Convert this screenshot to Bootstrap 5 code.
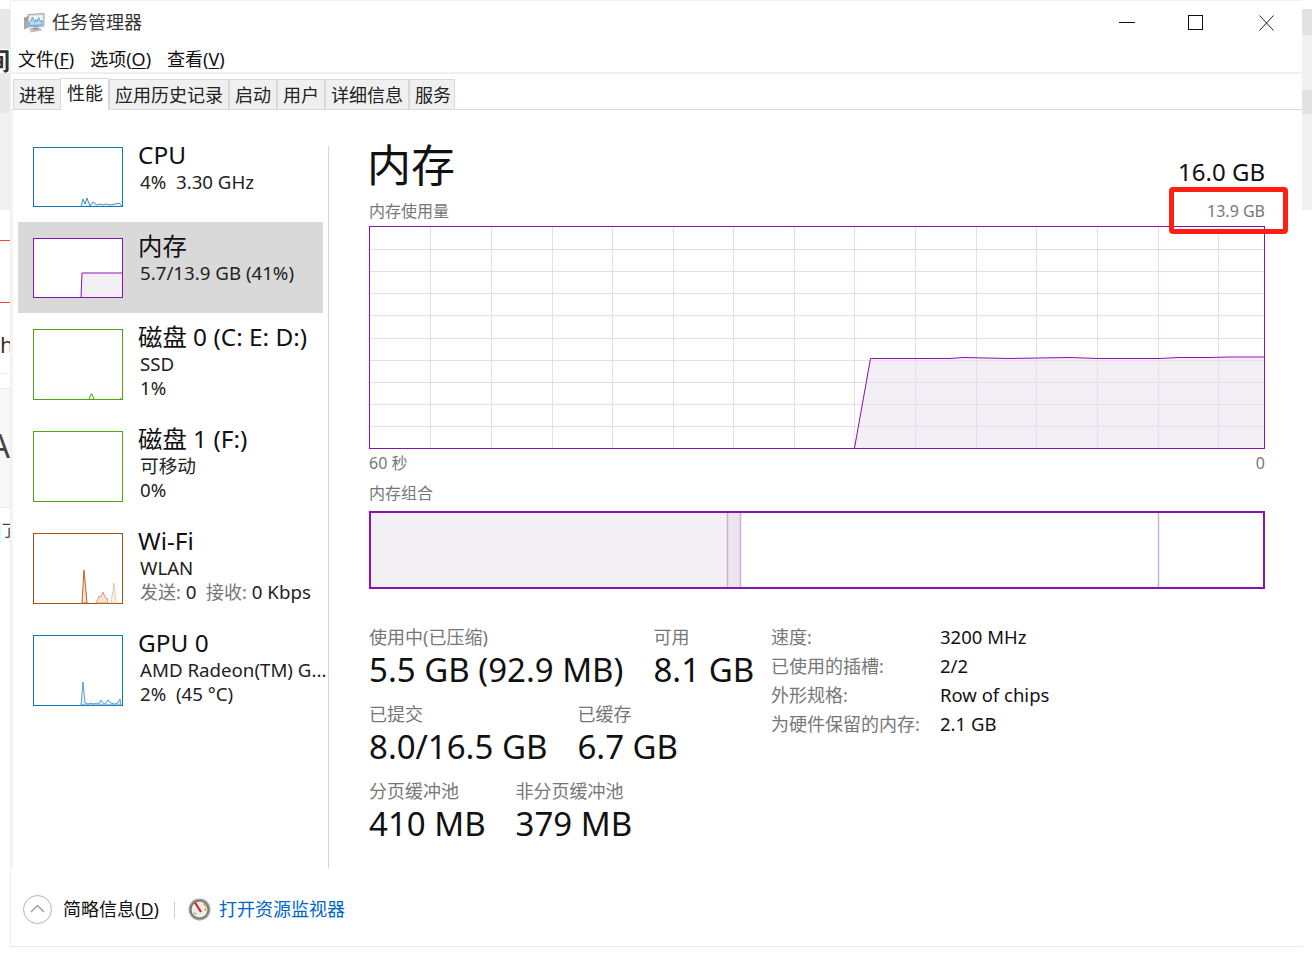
<!DOCTYPE html>
<html lang="zh-CN">
<head>
<meta charset="utf-8">
<title>任务管理器</title>
<link href="https://cdn.jsdelivr.net/npm/bootstrap@5.3.0/dist/css/bootstrap.min.css" rel="stylesheet">
<style>
html,body{margin:0;height:100%;background:#fff;overflow:hidden}
body{font-family:"Noto Sans","Noto Sans CJK SC",sans-serif;font-size:18px;color:#111;position:relative}
.peek{position:absolute;overflow:hidden;white-space:nowrap;line-height:1}
.pk-a{left:0;top:9px;width:10px;height:104px;background:#e8e8e8}
.pk-b{left:0;top:113px;width:10px;height:97px;background:#f1f1f1}
.pk-c{left:0;top:49px;width:10px;height:24px;font-size:24px;font-weight:700;color:#333;direction:rtl;background:#fff}
.pk-d{left:0;top:240px;width:10px;height:1px;background:#ff4040}
.pk-e{left:0;top:302px;width:10px;height:1px;background:#ff4040}
.pk-f{left:0;top:333px;width:10px;height:24px;font-size:22px;color:#333;text-align:right}
.pk-g{left:0;top:373px;width:10px;height:16px;border-top:1px solid #eee;border-bottom:1px solid #e8e8e8}
.pk-h{left:0;top:389px;width:10px;height:119px;background:#f8f8f8;border-bottom:1px solid #e8e8e8}
.pk-i{left:0;top:430px;width:10px;height:34px;font-size:32px;color:#444;direction:rtl}
.pk-j{left:0;top:522px;width:10px;height:20px;font-size:16px;color:#444;border-left:1px solid #c8ffff}
.pk-k{left:1302px;top:9px;width:10px;height:26px;background:#e2e2e2}
.pk-l{left:1302px;top:35px;width:10px;height:55px;background:#f1f1f1}
.pk-m{left:1302px;top:90px;width:10px;height:24px;background:#e2e2e2}
.pk-n{left:1302px;top:114px;width:10px;height:96px;background:#f1f1f1}
.tm-win{position:absolute;left:10px;top:0;width:1292px;height:947px;background:#fff;border-top:1px solid #f0f0f0;border-bottom:1px solid #e8e8e8;border-left:1px solid #f0f0f0;display:flex;flex-direction:column}
.tm-title{height:37px;padding:6px 0 0 12px}
.tm-title span{font-size:18px;color:#333;margin-left:7px}
.tm-ctrl{padding-right:20px}
.tm-ctrl svg{display:block}
.tm-menu{height:36px;padding-left:7px;gap:16px;border-bottom:2px solid #f0f0f0;line-height:42px}
.tm-tabs{height:36px;padding:3px 0 0 2px;border-bottom:1px solid #d9d9d9;flex-wrap:nowrap;align-items:flex-end}
.tm-tabs .nav-link{height:30px;margin:0;padding:0 5px;line-height:31px;background:#f0f0f0;border:1px solid #d9d9d9;border-bottom:0;border-radius:0;color:#222;font-size:18px}
.tm-tabs .nav-item:last-child .nav-link{padding-right:3px}
.tm-tabs .nav-link.active{height:32px;padding:0 5px 0 6px;line-height:29px;background:#fff;color:#222;margin:0 0 -1px -1px;border-color:#d9d9d9}
.tm-body{height:758px;border-left:2px solid #f5f5f5}
.tm-side{width:315px;flex:none;padding:21px 0 0 5px}
.tm-rule{width:1px;height:722px;margin-top:36px;background:#d4d4d4;flex:none}
.tm-item{width:305px;padding:16px 0 0 15px;gap:15px;height:102px;white-space:nowrap}
.tm-item.short{height:91px}
.tm-item.sel{background:#d9d9d9}
.tm-thumb{display:block;flex:none}
.tm-text{margin-top:-6px}
.tm-name{font-size:24.4px;line-height:28px}
.tm-sub{font-size:18.7px;line-height:24px;margin-left:2px;color:#222}
.tm-sub.first{margin-top:1px}
.tm-sub em{font-style:normal;color:#777;font-size:18px}
.tm-main{width:896px;flex:none;margin-left:40px;padding-top:30px}
.tm-h1{font-size:44px;line-height:50px;color:#111;margin-left:-2px}
.tm-cap{font-size:24px;line-height:24px;padding-top:20px}
.tm-label{font-size:16px;line-height:20px;color:#777}
.tm-lblrow{margin-top:11px;margin-bottom:5px}
.tm-axis{margin-top:4px}
.tm-axis2{margin-top:10px;margin-bottom:8px}
.tm-chart{display:block}
.tm-stats{margin-top:33px}
.tm-left{width:402px;padding-top:4px;flex:none}
.tm-srow{gap:30px;margin-bottom:11px}
.tm-k{font-size:18px;line-height:22px;color:#777;white-space:nowrap}
.tm-v{font-size:33px;line-height:44px;color:#111;white-space:nowrap}
.tm-grid{display:grid;grid-template-columns:169px auto;grid-auto-rows:29px;line-height:27px;font-size:18.5px;padding-top:1px}
.tm-grid .k{color:#777;font-size:18px;line-height:29px}
.tm-foot{height:77px;padding:6px 0 0 12px}
.tm-more{margin-left:11px;color:#111}
.tm-sep{width:1px;height:16px;background:#ccc;margin:0 13px 0 15px}
.tm-link{margin-left:8px;color:#0066cc;text-decoration:none}
.tm-mark{position:absolute;left:1169px;top:187px;width:119px;height:47px;border:5px solid #ff2015;border-radius:4px}
u{text-underline-offset:2px}
</style>
</head>
<body>
<div class="peek pk-a"></div><div class="peek pk-b"></div><div class="peek pk-c">间</div>
<div class="peek pk-d"></div><div class="peek pk-e"></div><div class="peek pk-f">h</div>
<div class="peek pk-g"></div><div class="peek pk-h"></div><div class="peek pk-i">A</div><div class="peek pk-j">了</div>
<div class="peek pk-k"></div><div class="peek pk-l"></div><div class="peek pk-m"></div><div class="peek pk-n"></div>

<div class="tm-win">
  <div class="tm-title d-flex justify-content-between">
    <div class="d-flex align-items-center">
      <svg width="22" height="20" viewBox="0 0 22 20"><path d="M1 4.500 5 3v12l-4 1.500z" fill="#a8aba6"/><path d="M2 6h2v1H2z" fill="#6e9e5a"/><path d="M5 1.500 21 .5v12.500L5 14z" fill="#d5d9de" stroke="#a2a6ab"/><path d="M6.500 3 19.500 2.200v9.300L6.500 12.500z" fill="#f3f8fc"/><path d="M6.500 9.500 8 8l1.500-4 2 5.500 1.500-3 1.500 2.500 1-4.500 2 4 1.500-1v4.500L6.500 12.500z" fill="#bcdcf0" stroke="#3a93cf" stroke-width=".8"/><path d="M6 15.500 17 14.500l2 3-11 2z" fill="#bcbfc2"/><path d="M10 14.500h5v2h-5z" fill="#8f9296"/></svg>
      <span>任务管理器</span>
    </div>
    <div class="tm-ctrl d-flex align-items-center">
      <svg width="177" height="18" viewBox="0 0 177 18"><path d="M14 8.500H30" stroke="#111" fill="none"/><rect x="83.500" y="1.500" width="14" height="14" fill="none" stroke="#111"/><path d="M154.500 1.500l14 15M168.500 1.500l-14 15" stroke="#222" fill="none"/></svg>
    </div>
  </div>
  <div class="tm-menu d-flex">
    <span>文件(<u>F</u>)</span><span>选项(<u>O</u>)</span><span>查看(<u>V</u>)</span>
  </div>
  <ul class="nav nav-tabs tm-tabs">
    <li class="nav-item"><a class="nav-link" href="#">进程</a></li>
    <li class="nav-item"><a class="nav-link active" href="#">性能</a></li>
    <li class="nav-item"><a class="nav-link" href="#">应用历史记录</a></li>
    <li class="nav-item"><a class="nav-link" href="#">启动</a></li>
    <li class="nav-item"><a class="nav-link" href="#">用户</a></li>
    <li class="nav-item"><a class="nav-link" href="#">详细信息</a></li>
    <li class="nav-item"><a class="nav-link" href="#">服务</a></li>
  </ul>
  <div class="tm-body d-flex">
    <div class="tm-side">
      <div class="tm-item short d-flex">
        <svg class="tm-thumb" width="90" height="60" viewBox="0 0 90 60"><rect x=".5" y=".5" width="89" height="59" fill="#fff" stroke="#1178b4"/><path d="M48 59l2-7 2 5 2-6 3 8 3-4 4 3 3-1 3 1 3-1 4 1 5-1 4-1 3 3" fill="#e8f2f8" stroke="#1178b4" stroke-width=".8"/></svg>
        <div class="tm-text"><div class="tm-name">CPU</div><div class="tm-sub first">4%&nbsp; 3.30 GHz</div></div>
      </div>
      <div class="tm-item short sel d-flex">
        <svg class="tm-thumb" width="90" height="60" viewBox="0 0 90 60"><rect x=".5" y=".5" width="89" height="59" fill="#fff" stroke="#8b12ae"/><path d="M48 59.500 49 35H89.500V59.500z" fill="#f2f0f4" stroke="#8b12ae"/></svg>
        <div class="tm-text"><div class="tm-name">内存</div><div class="tm-sub first">5.7/13.9 GB (41%)</div></div>
      </div>
      <div class="tm-item d-flex">
        <svg class="tm-thumb" width="90" height="71" viewBox="0 0 90 71"><rect x=".5" y=".5" width="89" height="70" fill="#fff" stroke="#4da60c"/><path d="M56 70l2-5h1l2 5M87 70l1-1" fill="#eef7e6" stroke="#4da60c"/></svg>
        <div class="tm-text"><div class="tm-name">磁盘 0 (C: E: D:)</div><div class="tm-sub first">SSD</div><div class="tm-sub">1%</div></div>
      </div>
      <div class="tm-item d-flex">
        <svg class="tm-thumb" width="90" height="71" viewBox="0 0 90 71"><rect x=".5" y=".5" width="89" height="70" fill="#fff" stroke="#4da60c"/></svg>
        <div class="tm-text"><div class="tm-name">磁盘 1 (F:)</div><div class="tm-sub first">可移动</div><div class="tm-sub">0%</div></div>
      </div>
      <div class="tm-item d-flex">
        <svg class="tm-thumb" width="90" height="71" viewBox="0 0 90 71"><rect x=".5" y=".5" width="89" height="70" fill="#fff" stroke="#a7500f"/><path d="M49 70l2-33 3 33z" fill="#f4e4d8" stroke="#b9682c"/><path d="M63 70l3-7 2 1 2-5 2 5 2 1 1 5z" fill="#f4e4d8" stroke="#c87f47" stroke-dasharray="1.500 .8"/><path d="M78 70l3-20 2 20z" fill="#fbf0ea" stroke="#dc9f7c" stroke-dasharray="1 1"/></svg>
        <div class="tm-text"><div class="tm-name">Wi-Fi</div><div class="tm-sub first">WLAN</div><div class="tm-sub"><em>发送:</em> 0&nbsp; <em>接收:</em> 0 Kbps</div></div>
      </div>
      <div class="tm-item d-flex">
        <svg class="tm-thumb" width="90" height="71" viewBox="0 0 90 71"><rect x=".5" y=".5" width="89" height="70" fill="#fff" stroke="#1178b4"/><path d="M48 70l2-23 2 21 3 1 3-1 3 1 3-1 2 1 2-4 2 3 2 1 3-4 3 3 3 1 4-1 2-4 1 6z" fill="#e8f2f8" stroke="#2d8ac4" stroke-width=".8"/></svg>
        <div class="tm-text"><div class="tm-name">GPU 0</div><div class="tm-sub first">AMD Radeon(TM) G...</div><div class="tm-sub">2%&nbsp; (45 °C)</div></div>
      </div>
    </div>
    <div class="tm-rule"></div>
    <div class="tm-main">
      <div class="d-flex justify-content-between">
        <div class="tm-h1">内存</div>
        <div class="tm-cap">16.0 GB</div>
      </div>
      <div class="tm-lblrow tm-label d-flex justify-content-between"><span>内存使用量</span><span>13.9 GB</span></div>
      <svg class="tm-chart" width="896" height="223" viewBox="0 0 896 223">
        <rect x=".5" y=".5" width="895" height="222" fill="#fff"/>
        <path d="M485.500 222 501.500 132H896V222z" fill="#f2f0f4"/>
        <path d="M61.500 1V222M122.500 1V222M183.500 1V222M243.500 1V222M304.500 1V222M364.500 1V222M425.500 1V222M485.500 1V222M546.500 1V222M607.500 1V222M667.500 1V222M728.500 1V222M789.500 1V222M849.500 1V222M1 23.500H895M1 45.500H895M1 67.500H895M1 89.500H895M1 112.500H895M1 134.500H895M1 156.500H895M1 178.500H895M1 200.500H895" stroke="#e9dcef" fill="none"/>
        <path d="M485.500 222 501.500 132.500H580L595 131.500 640 132.500 700 131.500 730 132.500H790L810 131.500H840L860 131H896" fill="none" stroke="#8b12ae"/>
        <rect x=".5" y=".5" width="895" height="222" fill="none" stroke="#8b12ae"/>
      </svg>
      <div class="tm-axis tm-label d-flex justify-content-between"><span>60 秒</span><span>0</span></div>
      <div class="tm-axis2 tm-label">内存组合</div>
      <svg class="tm-chart" width="896" height="78" viewBox="0 0 896 78">
        <rect x="1" y="1" width="894" height="76" fill="#fff"/>
        <rect x="1" y="1" width="358" height="76" fill="#f2f0f4"/>
        <rect x="358" y="1" width="14" height="76" fill="#ece4f0"/>
        <path d="M358.500 1V77M371.500 1V77M789.500 1V77" stroke="#cdaed9" stroke-width="1.500" fill="none"/>
        <rect x="1" y="1" width="894" height="76" fill="none" stroke="#8b12ae" stroke-width="2"/>
      </svg>
      <div class="tm-stats d-flex">
        <div class="tm-left">
          <div class="tm-srow d-flex">
            <div><div class="tm-k">使用中(已压缩)</div><div class="tm-v">5.5 GB (92.9 MB)</div></div>
            <div><div class="tm-k">可用</div><div class="tm-v">8.1 GB</div></div>
          </div>
          <div class="tm-srow d-flex">
            <div><div class="tm-k">已提交</div><div class="tm-v">8.0/16.5 GB</div></div>
            <div><div class="tm-k">已缓存</div><div class="tm-v">6.7 GB</div></div>
          </div>
          <div class="tm-srow d-flex">
            <div><div class="tm-k">分页缓冲池</div><div class="tm-v">410 MB</div></div>
            <div><div class="tm-k">非分页缓冲池</div><div class="tm-v">379 MB</div></div>
          </div>
        </div>
        <div class="tm-grid">
          <div class="k">速度:</div><div>3200 MHz</div>
          <div class="k">已使用的插槽:</div><div>2/2</div>
          <div class="k">外形规格:</div><div>Row of chips</div>
          <div class="k">为硬件保留的内存:</div><div>2.1 GB</div>
        </div>
      </div>
    </div>
  </div>
  <div class="tm-foot d-flex align-items-center">
    <svg width="29" height="29" viewBox="0 0 29 29"><circle cx="14.500" cy="14.500" r="14" fill="#fff" stroke="#b4b4b4"/><path d="M8 17l6.500-6.500L21 17" fill="none" stroke="#a0a0a0" stroke-width="1.500"/></svg>
    <span class="tm-more">简略信息(<u>D</u>)</span>
    <span class="tm-sep"></span>
    <svg width="23" height="23" viewBox="0 0 23 23"><circle cx="11.500" cy="11.500" r="11" fill="#a5a5a0"/><circle cx="11.500" cy="11.500" r="9.500" fill="#6f6f6a"/><circle cx="11.500" cy="11.500" r="8" fill="#efede9"/><path d="M7 4.500l6 9.500" stroke="#d8231f" stroke-width="2.200"/><path d="M15.500 5.500l2.500 3M18 10l-1 3" stroke="#dc9a5a" stroke-width="1.500" fill="none"/><path d="M6 14l2 3" stroke="#b9b4ac" stroke-width="1.500"/></svg>
    <a class="tm-link" href="#">打开资源监视器</a>
  </div>
</div>
<div class="tm-mark"></div>
<script src="https://cdn.jsdelivr.net/npm/bootstrap@5.3.0/dist/js/bootstrap.bundle.min.js"></script>
</body>
</html>
